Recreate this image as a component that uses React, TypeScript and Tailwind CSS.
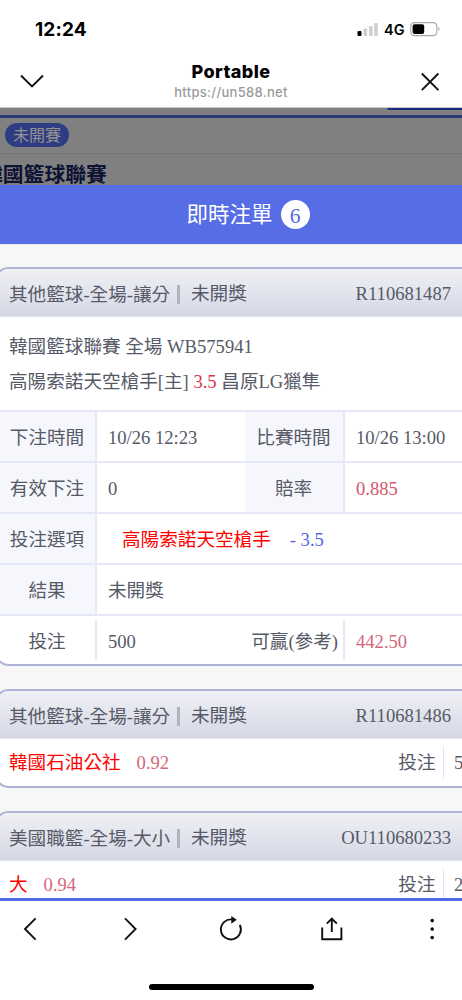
import type { ReactNode } from "react";

const serif = "font-['Liberation_Serif','Noto_Sans_CJK_TC',serif]";

function StatusBar() {
  return (
    <div className="flex h-[59px] shrink-0 justify-between pl-[35px] pr-[21px]">
      <span className="mt-[17px] text-[19px] leading-[26px] font-bold tracking-[0.15px]">12:24</span>
      <div className="mt-[17px] flex h-6 items-center">
        <svg width="22" height="16" viewBox="0 0 22 16">
          <rect x="0.5" y="10" width="4" height="5" rx="1" fill="#000" />
          <rect x="6.5" y="7.5" width="3.6" height="7.5" rx="1" fill="#cfcfcf" />
          <rect x="12" y="5" width="3.6" height="10" rx="1" fill="#cfcfcf" />
          <rect x="17.2" y="2" width="3.6" height="13" rx="1" fill="#cfcfcf" />
        </svg>
        <span className="ml-[5px] w-[21px] pt-[2px] text-[14.5px] leading-6 font-semibold">4G</span>
        <svg className="ml-[5px]" width="31" height="16" viewBox="0 0 31 16">
          <rect x="0.8" y="1.6" width="26" height="13" rx="3.6" fill="none" stroke="#a6a6a6" strokeWidth="1.1" />
          <rect x="2.6" y="3.3" width="11.6" height="9.6" rx="2" fill="#000" />
          <path d="M28.4 6.1c1.5.6 1.5 3.4 0 4z" fill="#a6a6a6" />
        </svg>
      </div>
    </div>
  );
}

function BrowserHeader() {
  return (
    <header className="flex h-[48px] shrink-0 items-start justify-between pl-5 pr-5">
      <svg className="mt-[14px]" width="24" height="18" viewBox="0 0 24 18" fill="none" stroke="#111" strokeWidth="1.9">
        <path d="M1 2.5 12 13.5 23 2.5" />
      </svg>
      <div className="flex flex-col items-center">
        <h1 className="text-[18px] leading-[26px] font-extrabold tracking-[0.4px]">Portable</h1>
        <p className="text-[13px] leading-[14px] font-medium tracking-[0.3px] text-[#9b9b9b]">https://un588.net</p>
      </div>
      <svg className="mt-[12px]" width="24" height="22" viewBox="0 0 24 22" fill="none" stroke="#111" strokeWidth="1.9">
        <path d="M3.8 2.5 20.4 19.1M20.4 2.5 3.8 19.1" />
      </svg>
    </header>
  );
}

/* page behind the overlay */
function DimmedPage() {
  return (
    <div className={`h-[78px] shrink-0 overflow-hidden border-t border-[#c8c8c8] bg-[#808080] ${serif}`}>
      <div className="flex h-[7px] justify-end">
        <div className="h-[2px] w-[75px] rounded-bl bg-[#1b2b82]" />
      </div>
      <div className="h-[2.5px] bg-[#2b3977]" />
      <div className="flex h-[36px] items-center border-b border-[#73737f] pl-[5px]">
        <span className="flex h-6 w-16 items-center justify-center rounded-full bg-[#2e3c82] pt-px text-[16px] leading-6 text-[#929292]">
          未開賽
        </span>
      </div>
      <div className="-ml-[18px] pt-[7px] text-[20.8px] leading-7 font-bold whitespace-nowrap text-[#0e1233]">
        韓國籃球聯賽
      </div>
    </div>
  );
}

/* cards run wider than the screen, so only the left corners show */
function Card({ children, className = "" }: { children: ReactNode; className?: string }) {
  return (
    <section
      className={`-mr-[16px] -ml-[4px] shrink-0 overflow-hidden rounded-[12px] border-2 border-[#afb4d6] bg-white pr-[14px] pl-[2px] ${className}`}
    >
      {children}
    </section>
  );
}

function CardHead({ title, code }: { title: string; code: string }) {
  return (
    <div className="-mr-[14px] -ml-[2px] flex h-[48px] items-center border-b border-[#e2e4f0] bg-gradient-to-b from-[#f0f1f5] to-[#d5d7e5] pr-[25px] pl-[11px]">
      <span className="w-[168px] pt-[4px] whitespace-nowrap">{title}</span>
      <i className="mt-[3px] h-[19px] w-[3px] bg-[#b2b3c2]" />
      <span className="ml-[11px] pt-[2px]">未開獎</span>
      <span className="ml-auto pt-[3px]">{code}</span>
    </div>
  );
}

function Label({ children }: { children: ReactNode }) {
  return (
    <div className="flex items-center justify-center border-r-2 border-[#e6e7f6] bg-[#f6f7fc] pt-[3px] pr-px">{children}</div>
  );
}

function Value({ children, className = "" }: { children: ReactNode; className?: string }) {
  return <div className={`flex items-center pt-[3px] pl-[11px] ${className}`}>{children}</div>;
}

function Summary({ pick, odds, amount }: { pick: string; odds: string; amount: string }) {
  return (
    <div className="flex h-[47px] items-center pl-[9px]">
      <span className="pt-px text-[#ff0000]">{pick}</span>
      <span className="ml-[16px] pt-px text-[#d5677a]">{odds}</span>
      <span className="ml-auto pt-px">投注</span>
      <i className="ml-[7px] h-8 w-[1.5px] bg-[#dfe3f5]" />
      <span className="w-[18px] pt-px pl-[10px]">{amount}</span>
    </div>
  );
}

function BetList() {
  const row = "grid h-[51px] border-t-2 border-[#e6e7f6]";

  return (
    <main
      className={`flex h-[654px] shrink-0 flex-col overflow-hidden border-t border-[#e9ebf7] bg-[#f7f7f7] pt-[22px] text-[18.6px] leading-7 text-[#565a67] ${serif}`}
    >
      <Card className="h-[399px]">
        <CardHead title="其他籃球-全場-讓分" code="R110681487" />
        <div className="h-[93px] pt-[12px] pl-[9px] whitespace-nowrap">
          <p className="leading-[35px]">韓國籃球聯賽 全場 WB575941</p>
          <p className="leading-[35px]">
            高陽索諾天空槍手[主] <span className="text-[#d9364c]">3.5</span> 昌原LG獵隼
          </p>
        </div>
        <div className={`${row} grid-cols-[97px_148px_100px_1fr]`}>
          <Label>下注時間</Label>
          <Value>10/26 12:23</Value>
          <Label>比賽時間</Label>
          <Value>10/26 13:00</Value>
        </div>
        <div className={`${row} grid-cols-[97px_148px_100px_1fr]`}>
          <Label>有效下注</Label>
          <Value>0</Value>
          <Label>賠率</Label>
          <Value className="text-[#d5566b]">0.885</Value>
        </div>
        <div className={`${row} grid-cols-[97px_1fr]`}>
          <Label>投注選項</Label>
          <Value>
            <span className="ml-[14px] text-[#ff0000]">高陽索諾天空槍手</span>
            <span className="ml-[19px] text-[#5469e4]">- 3.5</span>
          </Value>
        </div>
        <div className={`${row} grid-cols-[97px_1fr]`}>
          <Label>結果</Label>
          <Value>未開獎</Value>
        </div>
        <div className="flex h-[50px] items-center border-t-2 border-[#e6e7f6]">
          <div className="flex h-10 w-[97px] items-center justify-center border-r-2 border-[#e6e7f6] pt-[3px] pr-px">投注</div>
          <Value className="w-[144px]">500</Value>
          <div className="flex h-10 w-[104px] items-center justify-end border-r-2 border-[#e6e7f6] pt-[3px] pr-[5px] whitespace-nowrap">
            可贏(參考)
          </div>
          <Value className="text-[#d5677a]">442.50</Value>
        </div>
      </Card>
      <Card className="mt-[23px] h-[99px]">
        <CardHead title="其他籃球-全場-讓分" code="R110681486" />
        <Summary pick="韓國石油公社" odds="0.92" amount="5" />
      </Card>
      <Card className="mt-[23px] h-[99px]">
        <CardHead title="美國職籃-全場-大小" code="OU110680233" />
        <Summary pick="大" odds="0.94" amount="2" />
      </Card>
    </main>
  );
}

function BottomBar() {
  const icon = {
    width: 28,
    height: 28,
    viewBox: "0 0 28 28",
    fill: "none",
    stroke: "#111",
    strokeWidth: 1.9,
  };

  return (
    <footer className="flex grow flex-col items-center border-t-[3px] border-[#5468e4] pt-[14px]">
      <nav className="flex w-full justify-between pr-4 pl-4">
        <svg {...icon}>
          <path d="M19.6 3.4 9 14l10.6 10.6" />
        </svg>
        <svg {...icon}>
          <path d="M8 3.4 18.6 14 8 24.6" />
        </svg>
        <svg {...icon}>
          <path d="M15.2 4.5A10 10 0 1 0 22.8 9.9" />
          <path d="M14.3 1 19.8 4.8 14.3 8.8z" fill="#111" stroke="none" />
        </svg>
        <svg {...icon}>
          <path d="M4.2 12.6v11.6h19.2V12.6M13.8 17V4M8.8 8.6l5-5 5 5" />
        </svg>
        <svg {...icon} fill="#111" stroke="none">
          <circle cx="14.2" cy="5.6" r="1.8" />
          <circle cx="14.2" cy="14.1" r="1.8" />
          <circle cx="14.2" cy="22.6" r="1.8" />
        </svg>
      </nav>
      <div className="mt-[41px] h-[6px] w-[165px] rounded-full bg-black" />
    </footer>
  );
}

export default function App() {
  return (
    <div className="flex h-[1000px] w-[462px] flex-col overflow-hidden bg-white font-[Inter,sans-serif] text-black">
      <StatusBar />
      <BrowserHeader />
      <DimmedPage />
      <div
        className={`flex h-[59px] shrink-0 items-center justify-center bg-[#566de6] pl-[34px] text-[21.5px] leading-8 text-white ${serif}`}
      >
        <span className="pt-px">即時注單</span>
        <span className="ml-2 flex size-[29px] items-center justify-center rounded-full bg-white pt-[3px] text-[#566de6]">
          6
        </span>
      </div>
      <BetList />
      <BottomBar />
    </div>
  );
}
